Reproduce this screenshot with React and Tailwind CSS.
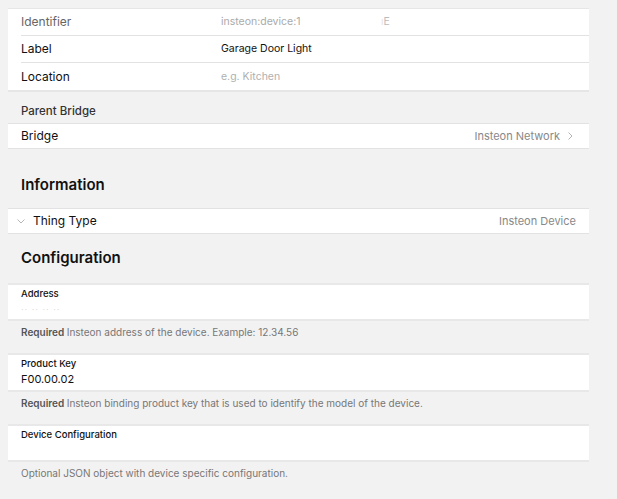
import React from "react";

const font = { fontFamily: "Inter, 'Noto Sans', sans-serif" };

function Chevron({ dir = "right", className = "" }) {
  return (
    <svg width="8" height="8" viewBox="0 0 8 8" className={className} fill="none" stroke="#b5b5b5" strokeWidth="1">
      {dir === "right" ? <path d="M2.5 0.5 L6 4 L2.5 7.5" /> : <path d="M0.5 2.5 L4 6 L7.5 2.5" />}
    </svg>
  );
}

function Row({ label, value, valueClass, last }) {
  return (
    <div className="flex items-center h-[27px] pl-[13px]">
      <div className={`flex items-center h-full w-full ${last ? "" : "border-b border-[#e2e2e2]"}`}>
        <div className="w-[200px] text-[12px] text-[#111]">{label}</div>
        <div className={`text-[10.5px] ${valueClass}`}>{value}</div>
      </div>
    </div>
  );
}

function ConfigField({ label, value, placeholder, desc, required, h }) {
  return (
    <>
      <div className={`ml-[8px] w-[581px] bg-white border-t-2 border-b-2 border-[#e8e8e8] ${h} px-[13px] flex flex-col pt-[2px]`}>
        <div className="text-[9.5px] font-medium text-[#111] leading-[13px]">{label}</div>
        {value && <div className="text-[11px] text-[#111] leading-[16px] mt-[1px]">{value}</div>}
        {placeholder && <div className="text-[9px] text-[#ddd] leading-[18px] mt-[1px] tracking-[1px]">{placeholder}</div>}
      </div>
      <div className="px-[21px] pt-[3px] text-[10px] text-[#777] leading-[16px] h-[32px]">
        {required && <span className="font-semibold text-[#555]">Required </span>}
        {desc}
      </div>
    </>
  );
}

export default function App() {
  return (
    <div style={font} className="w-[617px] h-[499px] bg-[#f2f2f2] overflow-hidden pt-[8px]">
      <div className="ml-[8px] w-[581px] bg-white border-t border-b-2 border-[#e6e6e6]">
        <Row label={<span className="text-[#666]">Identifier</span>} value={<span className="flex"><span className="w-[160px]">insteon:device:1</span><span className="text-[#bbb]"><span className="text-[#e4e4e4]">ı</span>E</span></span>} valueClass="text-[#aaa]" />
        <Row label="Label" value="Garage Door Light" valueClass="text-[#111]" />
        <Row label="Location" value="e.g. Kitchen" valueClass="text-[#b0b0b0]" last />
      </div>

      <div className="px-[21px] pt-[11px] pb-[4px] text-[11.5px] font-medium text-[#333] leading-[16px]">Parent Bridge</div>

      <div className="ml-[8px] w-[581px] bg-white border-t border-b border-[#e2e2e2] h-[26px] flex items-center pl-[13px] pr-[15px]">
        <div className="flex-1 text-[12px] text-[#111]">Bridge</div>
        <div className="text-[11px] text-[#888]">Insteon Network</div>
        <Chevron className="ml-[6px]" />
      </div>

      <div className="px-[21px] pt-[26px] pb-[13px] text-[15px] font-semibold text-[#111] leading-[20px]">Information</div>

      <div className="ml-[8px] w-[581px] bg-white border-t border-b border-[#e2e2e2] h-[26px] flex items-center pl-[9px] pr-[13px]">
        <Chevron dir="down" />
        <div className="flex-1 ml-[8px] text-[12px] text-[#111]">Thing Type</div>
        <div className="text-[11px] text-[#888]">Insteon Device</div>
      </div>

      <div className="px-[21px] pt-[14px] pb-[15px] text-[15px] font-semibold text-[#111] leading-[20px]">Configuration</div>

      <ConfigField h="h-[38px]" label="Address" placeholder="·· ·· ·· ··" required desc="Insteon address of the device. Example: 12.34.56" />
      <ConfigField h="h-[39px]" label="Product Key" value="F00.00.02" required desc="Insteon binding product key that is used to identify the model of the device." />
      <ConfigField h="h-[38px]" label="Device Configuration" desc="Optional JSON object with device specific configuration." />
    </div>
  );
}
